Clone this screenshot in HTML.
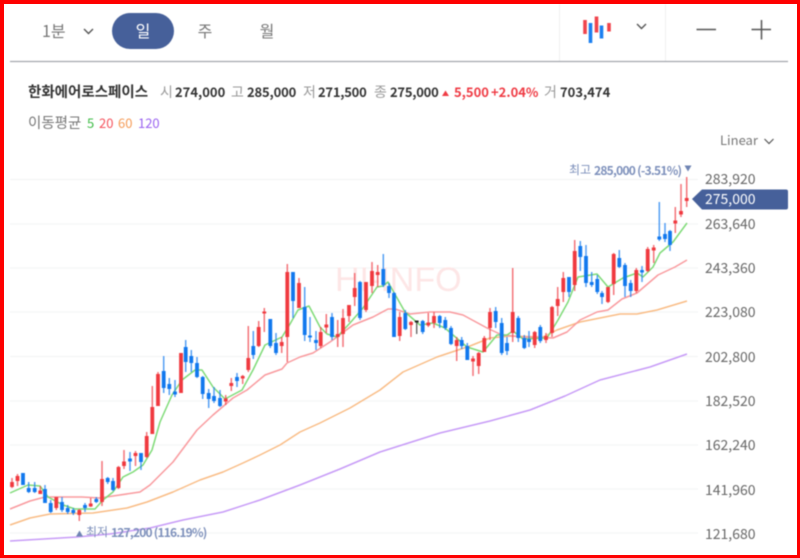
<!DOCTYPE html>
<html><head><meta charset="utf-8"><style>
html,body{margin:0;padding:0;background:#fff}
body{width:800px;height:558px;overflow:hidden;position:relative;font-family:"Noto Sans CJK KR","Liberation Sans",sans-serif}
svg{position:absolute;left:0;top:0}
text{font-family:"Noto Sans CJK KR","Liberation Sans",sans-serif}
</style></head><body>
<svg width="800" height="558" viewBox="0 0 800 558">
<g style="filter:blur(.5px)">
<!-- toolbar -->
<path d="M559.5 4V61M665.5 4V61" stroke="#f0f0f0" fill="none"/>
<path d="M10 61.5H788" stroke="#a3a6ad" stroke-width="1.2" fill="none"/>
<text x="42" y="37" font-size="16" fill="#777">1분</text>
<path d="M84 29l4.500 4.500 4.500-4.500" stroke="#555" stroke-width="1.400" fill="none"/>
<rect x="112" y="13" width="62" height="36" rx="18" fill="#46609a"/>
<text x="143" y="37" font-size="16" fill="#fff" text-anchor="middle">일</text>
<text x="205" y="37" font-size="16" fill="#777" text-anchor="middle">주</text>
<text x="267" y="37" font-size="16" fill="#777" text-anchor="middle">월</text>
<path d="M585 20V34M596.500 16.500V32.500M609 23V31.500" stroke="#f0444c" stroke-width="3.600" fill="none"/>
<path d="M590.500 23V43M601.500 25.500V38.500" stroke="#1b7ff0" stroke-width="3.600" fill="none"/>
<path d="M637 24l4.500 4.500 4.500-4.500" stroke="#555" stroke-width="1.400" fill="none"/>
<path d="M696.500 29.500H716M751.500 29.500H771M761.500 20V39.500" stroke="#555" stroke-width="1.500" fill="none"/>
<!-- info row -->
<text x="28" y="97" font-size="14.500" font-weight="700" fill="#333">한화에어로스페이스</text>
<text x="160" y="97" font-size="14" fill="#999">시</text>
<text x="175" y="97" font-size="13" font-weight="700" fill="#333">274,000</text>
<text x="231" y="97" font-size="14" fill="#999">고</text>
<text x="247" y="97" font-size="13" font-weight="700" fill="#333" letter-spacing="-.15">285,000</text>
<text x="303" y="97" font-size="14" fill="#999">저</text>
<text x="318" y="97" font-size="13" font-weight="700" fill="#333" letter-spacing="-.25">271,500</text>
<text x="374" y="97" font-size="14" fill="#999">종</text>
<text x="390" y="97" font-size="13" font-weight="700" fill="#333" letter-spacing="-.25">275,000</text>
<path d="M442 96l3.500-5.500 3.500 5.500z" fill="#ef3b44"/>
<text x="454" y="97" font-size="13" font-weight="700" fill="#ef3b44">5,500</text>
<text x="491" y="97" font-size="13" font-weight="700" fill="#ef3b44">+2.04%</text>
<text x="544" y="97" font-size="14" fill="#999">거</text>
<text x="560" y="97" font-size="13" font-weight="700" fill="#333">703,474</text>
<!-- MA legend -->
<text x="28" y="128" font-size="14.500" fill="#777">이동평균</text>
<text x="87" y="128" font-size="13" fill="#3dbb45">5</text>
<text x="99" y="128" font-size="13" fill="#f5525c">20</text>
<text x="118" y="128" font-size="13" fill="#f59a55">60</text>
<text x="138" y="128" font-size="13" fill="#9a63f0">120</text>
<!-- linear -->
<text x="720" y="145" font-size="13" fill="#777">Linear</text>
<path d="M764.500 139l4.500 4.500 4.500-4.500" stroke="#555" stroke-width="1.200" fill="none"/>
<!-- grid -->
<path d="M10 179.500H698M10 224H698M10 268H698M10 312H698M10 356.500H698M10 401H698M10 445H698M10 489H698M10 533H698" stroke="#f2f3f4" stroke-width="1" fill="none"/>
<!-- watermark -->
<text x="335" y="291" font-size="34" fill="#fde6e6" style="font-family:'Liberation Sans',sans-serif">HI-INFO</text>
<!-- y labels -->
<g font-size="14" fill="#666">
<text x="705" y="184">283,920</text>
<text x="705" y="229">263,640</text>
<text x="705" y="273">243,360</text>
<text x="705" y="317">223,080</text>
<text x="705" y="362">202,800</text>
<text x="705" y="406">182,520</text>
<text x="705" y="450">162,240</text>
<text x="705" y="495">141,960</text>
<text x="705" y="539">121,680</text>
</g>
<path d="M692 199L702 189.500H786Q788 189.500 788 191.500V207.500Q788 209.500 786 209.500H702Z" fill="#46609a"/>
<text x="705" y="204" font-size="14" fill="#fff">275,000</text>
<!-- MA lines -->
<g fill="none" stroke-width="1.500" stroke-linejoin="round">
<path stroke="#c79bf7" d="M10 541L77 537L110 534L150 528L183 520L223 512L260 500L300 485L340 469L380 452L440 433L490 421L530 410L565 396L600 380L650 367L687 354"/>
<path stroke="#f9bc85" d="M10 525L30 518L50 514L93 513L127 508L147 502L173 492L200 480L223 472L243 463L260 455L280 445L300 432L320 423L350 408L380 390L403 372L437 357L470 346L490 338L510 336L543 337L557 330L580 322L600 318L620 314L637 314L657 310L687 301"/>
<path stroke="#f99a9e" d="M10 509L30 501L45 497L82 497L100 498L113 496L140 492L150 485L173 462L197 430L213 415L233 398L247 390L265 375L282 369L287 363L300 357L313 353L330 342L337 337L353 325L373 317L388 309L395 309L410 314L430 312L450 312L463 315L487 328L502 335L523 337L553 338L567 332L580 320L597 312L608 310L622 299L637 293L658 275L675 267L687 260"/>
<path stroke="#7fdb78" d="M10 493L28 485L40 486L48 497L63 505L75 509L95 509L103 500L113 492L123 477L133 472L143 465L152 450L160 422L172 395L182 380L195 370L202 370L213 387L225 399L242 390L253 370L265 345L282 337L290 324L298 310L309 306L320 327L327 334L337 337L350 323L363 308L377 287L383 286L388 282L405 312L420 325L433 323L445 328L453 335L467 347L483 352L497 335L507 335L513 331L523 339L547 338L558 320L568 302L578 277L597 274L608 287L623 278L637 273L643 277L653 267L660 253L673 242L687 223"/>
</g>
<!-- wicks -->
<path fill="none" stroke="#f0444c" stroke-width="1.500" stroke-opacity=".75" d="M12 478V488M17.500 474V486M40.300 486V494M56.300 497V510M79.300 509V521M90.700 498V507M102 461V506M118.500 466V489M124 450V469M135.500 451V466M146.700 432V458M152.300 386V433M158 372V406M181 353V393M225.700 395V405M231.300 378V391M242.700 375V384M248.300 326V372M258.700 321V347M264.300 308V332M281.700 337V353M287.300 264V362M299 278V308M320.700 327V348M326.300 314V333M337.700 320V347M343 309V347M349 305V322M354.700 273V306M366 282V312M372 262V293M377.700 265V287M399.700 312V341M411 321V337M428.300 313V327M434 312V328M456.700 337V361M473 356V376M478.700 352V374M484.300 336V352M490 308V340M512.700 268V342M534.700 331V348M546 333V343M552 306V337M557.700 287V316M563.300 272V302M574.700 240V291M608 287V303M613.700 253V295M636.300 268V293M647.700 247V272M653.700 245V263M675.300 207V233M681 184V217M686.700 177V207"/>
<path fill="none" stroke="#1b7ff0" stroke-width="1.500" stroke-opacity=".75" d="M23 473V485M28.700 482V493M34.700 482V493M45 485V503M50.700 500V513M62 497V512M67.700 505V514M73.300 508V515M85 503V512M96.300 497V503M107.700 477V484M113 478V491M130 452V471M141 453V470M163.700 356V393M169.300 378V395M175 380V397M185.700 340V372M191.300 350V372M197 357V378M202.700 376V399M208.700 389V408M214 387V403M220 390V407M237 373V387M253.300 331V359M270.300 319V348M276 333V355M293 272V318M304.700 287V341M310 317V342M316 331V350M332 313V340M360 281V320M383.300 254V287M389 283V298M394 292V337M405.300 310V330M422.700 320V334M439.700 315V328M445.300 317V330M451 326V345M461.700 337V349M467.300 343V360M495.700 307V328M501.700 318V355M507 337V355M518.300 316V342M524.300 335V349M529 331V347M540.300 325V343M569 277V297M580.300 241V271M586 245V287M591.700 272V287M597.300 275V294M602 291V304M619.300 250V268M625 263V297M630.700 280V297M642 266V282M659.300 202V241M665 223V242M670 230V251"/>
<path fill="none" stroke="#333" stroke-width="1.300" stroke-opacity=".8" d="M416.700 321V334"/>
<!-- bodies -->
<path fill="none" stroke="#f0393f" stroke-width="3.800" d="M12 482V487M17.500 476V481M40.300 490.500V494M56.300 497V508M79.300 510V515M90.700 503.500V506.500M102 479V502M118.500 467V488M124 461.500V466M135.500 453V456M146.700 436V457M152.300 407V434M158 374V406M181 353V393M225.700 398.500V401.500M231.300 383V386M242.700 376V378.500M248.300 358V370M258.700 327V346M264.300 311.500V313.500M281.700 342V346M287.300 272V337M299 283V308M320.700 332V346M326.300 324.500V327.500M337.700 334V337M343 318V334M349 305V316M354.700 288V297M366 282V310M372 271V286M377.700 272V275M399.700 317V336M411 322V325M428.300 322.500V325.500M434 316V323M456.700 340V346M473 358.500V361.500M478.700 353V366M484.300 338V352M490 312V328M512.700 312V333M534.700 332V345M546 336V340M552 307V333M557.700 299V306M563.300 278V292M574.700 251V285M608 287V302M613.700 254V284M636.300 270V291M647.700 249V271M653.700 247.500V250.500M675.300 220.500V223.500M681 211V214.500M686.700 198V201"/>
<path fill="none" stroke="#1178ee" stroke-width="3.800" d="M23 473V485M28.700 488V492M34.700 488V492M45 489V503M50.700 503V512M62 502V510M67.700 508V512M73.300 510V513M85 505V508M96.300 499V502M107.700 478V482M113 481V490M130 458.500V461.500M141 453V462M163.700 371V388M169.300 384V389M175 391.500V394.500M185.700 347V362M191.300 356V363M197 363V377M202.700 377V394M208.700 393V399M214 396V401M220 398V406M237 377V381M253.300 346V355M270.300 319V346M276 343V353M293 272V301M304.700 307V335M310 335.500V337.500M316 340V343M332 317V337M360 282V318M383.300 269V285M389 286V293M394 293V337M405.300 313V329M422.700 321V332M439.700 316V323M445.300 320V328M451 328V344M461.700 340V346M467.300 346V360M495.700 311V322M501.700 323V353M507 343V351M518.300 318V338M524.300 338V348M529 339V342M540.300 327V341M569 277V292M580.300 246V257M586 256V283M591.700 282V285M597.300 279V292M602 293V297M619.300 258V267M625 265V286M630.700 283V291M642 270V272.500M659.300 236.500V239.500M665 234V239M670 231V245"/>
<path fill="none" stroke="#222" stroke-width="3.800" d="M416.700 320.500V322.500"/>
<!-- annotations -->
<text x="569" y="174" font-size="12" fill="#7d90bb">최고</text>
<text x="594" y="175" font-size="12" font-weight="700" fill="#7d90bb" letter-spacing="-.75">285,000 (-3.51%)</text>
<path d="M684.500 165.500h7l-3.500 6z" fill="#6f84b3"/>
<path d="M76 536.500l3.500-6 3.500 6z" fill="#6f84b3"/>
<text x="86" y="536" font-size="12" fill="#7d90bb">최저</text>
<text x="111" y="537" font-size="12" font-weight="700" fill="#7d90bb" letter-spacing="-.8">127,200 (116.19%)</text>
</g>
<!-- frame -->
<path d="M0 0H800V558H0Z M4 4V555H797V4Z" fill="#fe0000" fill-rule="evenodd"/>
</svg>
</body></html>
